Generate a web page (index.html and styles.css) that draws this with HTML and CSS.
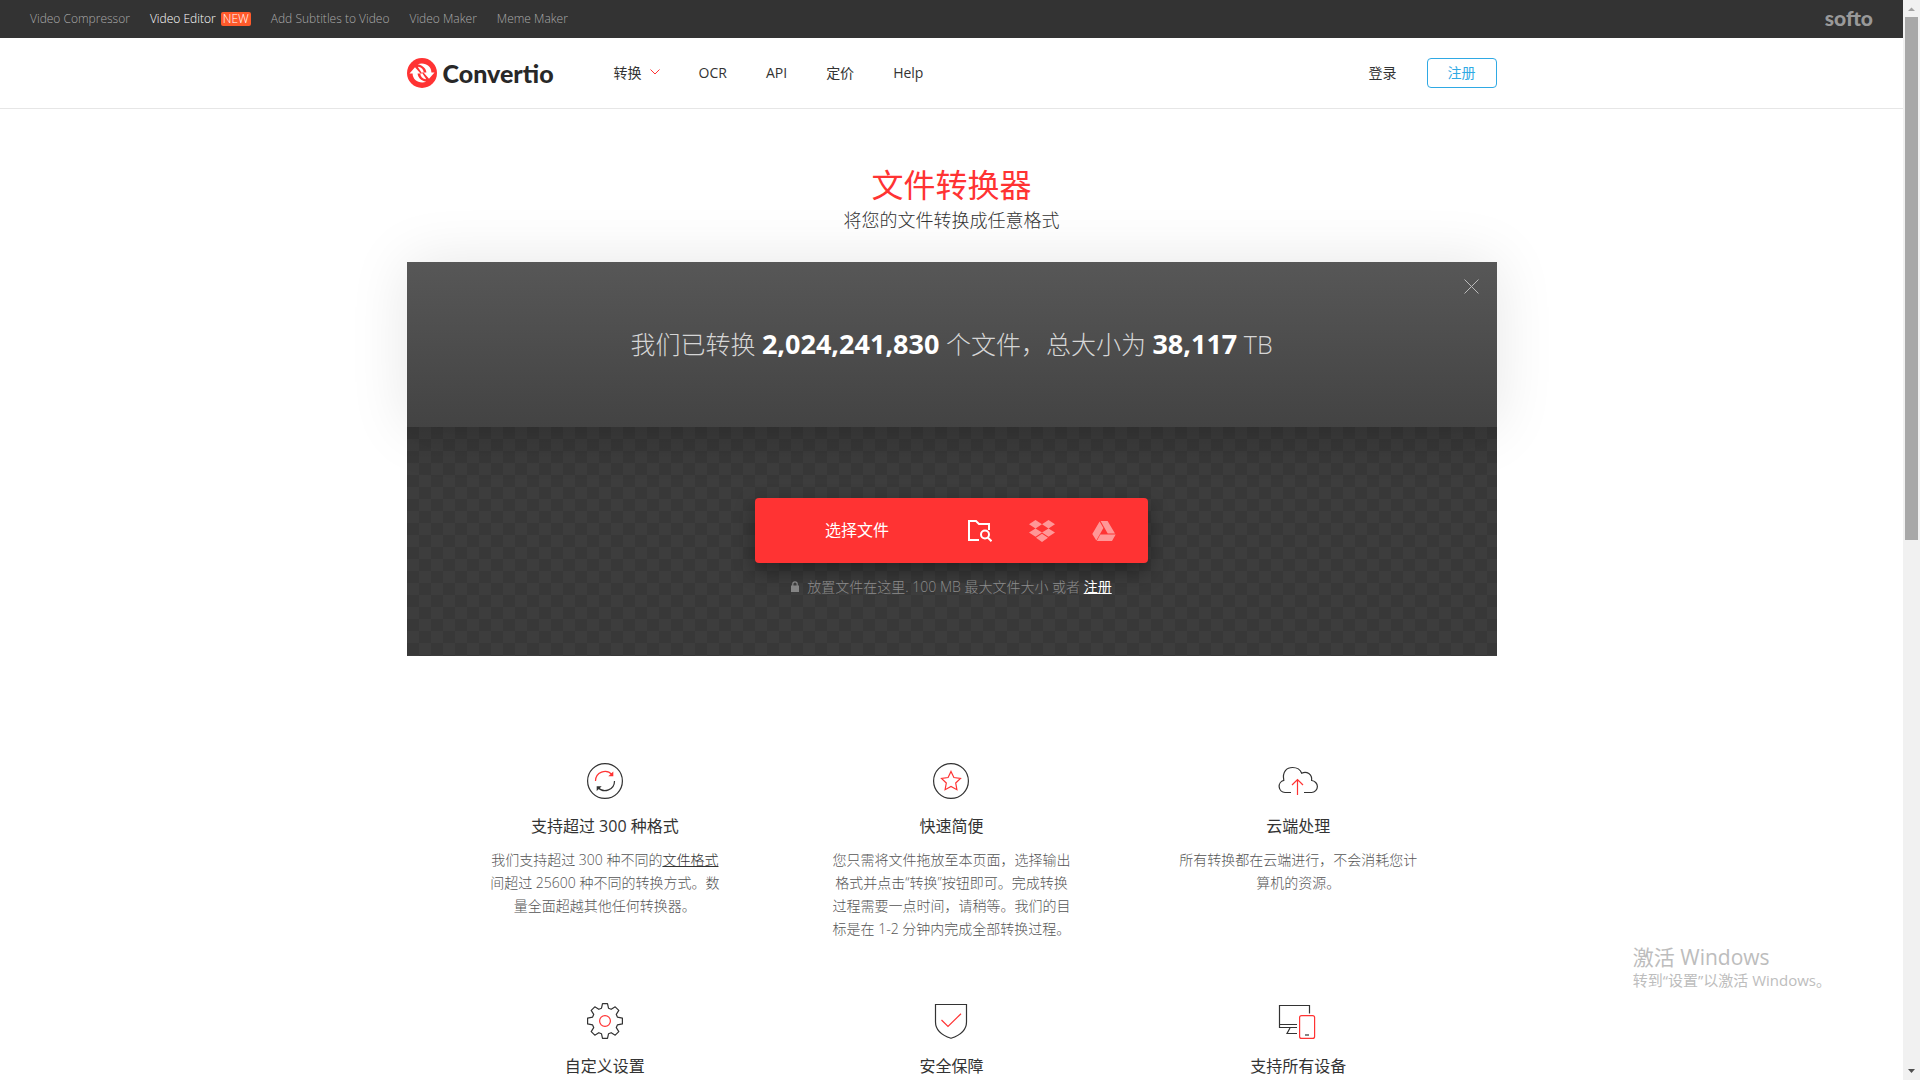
FILE: index.html
```html
<!DOCTYPE html>
<html lang="zh-CN">
<head>
<meta charset="utf-8">
<meta name="viewport" content="width=device-width, initial-scale=1">
<title>Convertio — 文件转换器</title>
<link rel="stylesheet" href="styles.css">
</head>
<body>
<div class="page">
  <div class="topbar">
    <nav class="topbar-links" aria-label="Softo">
      <a href="#">Video Compressor</a>
      <a href="#" class="active">Video Editor <span class="badge-new">NEW</span></a>
      <a href="#">Add Subtitles to Video</a>
      <a href="#">Video Maker</a>
      <a href="#">Meme Maker</a>
    </nav>
    <a href="#" class="softo">softo</a>
  </div>

  <header class="header">
    <div class="container header-inner">
      <a href="#" class="logo">
        <svg width="30" height="30" viewBox="0 0 30 30" aria-hidden="true">
          <circle cx="15" cy="15" r="15" fill="#f33"/>
          <path d="M2.500 15.500 8 9.300l5.500 6.200h-2.900c.3 4 3.200 7 8.600 8.300C12 26 5.600 22 5.600 15.500z" fill="#fff"/>
          <path d="M27.500 14.500 22 20.700l-5.500-6.200h2.900c-.3-4-3.200-7-8.600-8.300C18 4 24.400 8 24.400 14.500z" fill="#fff"/>
          <path d="M11.500 8.700c3.200.8 5 2.800 5.300 5.800h-2l4.200 6.200-.5.600c-3.200-.8-5-2.800-5.300-5.800h2L11 9.300z" fill="#fff"/>
        </svg>
        <span>Convertio</span>
      </a>
      <nav class="nav" aria-label="主菜单">
        <a href="#">转换
          <svg width="10" height="6" viewBox="0 0 10 6" fill="none" stroke="#f33" aria-hidden="true"><path d="M.5.5 5 5 9.500.5"/></svg>
        </a>
        <a href="#">OCR</a>
        <a href="#">API</a>
        <a href="#">定价</a>
        <a href="#">Help</a>
      </nav>
      <div class="account">
        <a href="#" class="login">登录</a>
        <button type="button" class="signup">注册</button>
      </div>
    </div>
  </header>

  <main class="container">
    <h1 class="title">文件转换器</h1>
    <p class="subtitle">将您的文件转换成任意格式</p>

    <section class="hero">
      <div class="stats">
        <p>我们已转换 <strong>2,024,241,830</strong> 个文件，总大小为 <strong>38,117</strong> TB</p>
        <button type="button" class="close" aria-label="关闭">
          <svg width="15" height="15" viewBox="0 0 15 15" fill="none" stroke="#bbb" aria-hidden="true"><path d="M.5.5l14 14M14.500.5l-14 14"/></svg>
        </button>
      </div>
      <div class="dropzone">
        <div class="picker">
          <button type="button" class="choose">选择文件</button>
          <button type="button" class="source" aria-label="本地文件">
            <svg width="24" height="22" viewBox="0 0 24 22" fill="none" stroke="#fff" stroke-width="2" aria-hidden="true"><path d="M11 20H1V1h7l3 3h10v6"/><circle cx="17" cy="14.500" r="4"/><path d="M19.800 17.500l3.700 3.700"/></svg>
          </button>
          <button type="button" class="source" aria-label="Dropbox">
            <svg width="26" height="22" viewBox="0 0 26 22" fill="#ff9797" aria-hidden="true"><path d="M6.500 0 13 4.200 6.500 8.400 0 4.200zM19.500 0 26 4.200l-6.500 4.200L13 4.200zM6.500 8.400l6.500 4.200-6.500 4.200L0 12.600zM19.500 8.400l6.500 4.200-6.500 4.200-6.500-4.200zM13 13.800l6 4-6 4.200-6-4.200z"/></svg>
          </button>
          <button type="button" class="source" aria-label="Google Drive">
            <svg width="24" height="20" viewBox="0 0 24 20" fill="#ff9797" aria-hidden="true"><path d="M7.600.5 11.400 7 4.300 19.500.3 13zM8.600 0h7l7.400 12.600h-7.300zM8.300 13.600h15.400L20 20H4.800z"/></svg>
          </button>
        </div>
        <p class="hint">
          <svg width="8" height="11" viewBox="0 0 8 11" aria-hidden="true"><path d="M0 4.500h8V11H0z" fill="#858585"/><path d="M1.800 5V3a2.200 2.200 0 0 1 4.400 0v2" fill="none" stroke="#858585" stroke-width="1.200"/></svg>
          <span>放置文件在这里. 100 MB 最大文件大小 或者 <a href="#">注册</a></span>
        </p>
      </div>
    </section>

    <section class="features">
      <article class="feature">
        <svg class="icon" width="42" height="36" viewBox="0 0 42 36" fill="none" stroke="#333" stroke-width="1.200" aria-hidden="true"><circle cx="21" cy="18" r="17.400"/><path d="M11.500 18a9.500 9.500 0 0 1 16.500-6.500" stroke="#f33"/><path d="M29.300 8.500v4.700h-5z" fill="#f33" stroke="none"/><path d="M30.500 18A9.500 9.500 0 0 1 14 24.500"/><path d="M12.700 28v-4.700h5z" fill="#333" stroke="none"/></svg>
        <h2>支持超过 300 种格式</h2>
        <p>我们支持超过 300 种不同的<a href="#">文件格式</a>间超过 25600 种不同的转换方式。数量全面超越其他任何转换器。</p>
      </article>
      <article class="feature">
        <svg class="icon" width="42" height="36" viewBox="0 0 42 36" fill="none" stroke="#333" stroke-width="1.200" aria-hidden="true"><circle cx="21" cy="18" r="17.400"/><path d="M21 8.500l2.900 6 6.600.9-4.800 4.600 1.200 6.700-5.900-3.200-5.900 3.200 1.200-6.700-4.800-4.600 6.600-.9z" stroke="#f33"/></svg>
        <h2>快速简便</h2>
        <p>您只需将文件拖放至本页面，选择输出格式并点击“转换”按钮即可。完成转换过程需要一点时间，请稍等。我们的目标是在 1-2 分钟内完成全部转换过程。</p>
      </article>
      <article class="feature">
        <svg class="icon" width="42" height="36" viewBox="0 0 42 36" fill="none" stroke="#333" stroke-width="1.200" aria-hidden="true"><path d="M14 29.500H8a6.200 6.200 0 0 1-1.200-12.200C5 8.500 10 4.500 15.500 4.500c4.500 0 7.800 2 9.200 5.700 5-2.600 10.800 1.200 9.900 7.300 3.200.4 5.800 3 5.800 6s-2.600 6-5.900 6H27"/><path d="M20.500 32V17M15 22l5.500-5.500L26 22" stroke="#f33"/></svg>
        <h2>云端处理</h2>
        <p>所有转换都在云端进行，不会消耗您计算机的资源。</p>
      </article>
      <article class="feature">
        <svg class="icon" width="42" height="36" viewBox="0 0 42 36" fill="none" stroke="#333" stroke-width="1.200" stroke-linejoin="round" aria-hidden="true"><path d="M18.500.6h5l1 4.600 2.700 1.100 4-2.500 3.600 3.600-2.500 4 1.100 2.700 5 1v5.800l-5 1-1.100 2.700 2.500 4-3.600 3.600-4-2.500-2.700 1.100-1 4.600h-5l-1-4.600-2.700-1.100-4 2.500-3.600-3.600 2.500-4-1.100-2.700-5-1v-5.800l5-1 1.100-2.700-2.500-4 3.600-3.600 4 2.500 2.700-1.100z"/><circle cx="21" cy="18" r="5.400" stroke="#f33"/></svg>
        <h2>自定义设置</h2>
      </article>
      <article class="feature">
        <svg class="icon" width="42" height="36" viewBox="0 0 42 36" fill="none" stroke="#333" stroke-width="1.200" aria-hidden="true"><path d="M5.500 1.500h31V19c0 8-7 13.500-15.500 16.300C12.500 32.500 5.500 27 5.500 19z"/><path d="M11.500 17l6.500 6.500L31 10.700" stroke="#f33"/></svg>
        <h2>安全保障</h2>
      </article>
      <article class="feature">
        <svg class="icon" width="42" height="36" viewBox="0 0 42 36" fill="none" stroke="#333" stroke-width="1.200" aria-hidden="true"><path d="M20 24.500H2.500v-22h30v8M2.500 21.500H20M13 25l-3 5.500h10"/><rect x="22.600" y="12.600" width="15" height="22.800" rx="2" stroke="#f33"/><path d="M28 32h4"/></svg>
        <h2>支持所有设备</h2>
      </article>
    </section>
  </main>

  <aside class="watermark">
    <p class="watermark-title">激活 Windows</p>
    <p>转到“设置”以激活 Windows。</p>
  </aside>
</div>
<div class="scrollbar" aria-hidden="true">
  <svg width="17" height="17" viewBox="0 0 17 17"><path d="M5 11h7L8.500 7.500z" fill="#a3a3a3"/></svg>
  <div class="thumb"></div>
  <svg width="17" height="17" viewBox="0 0 17 17"><path d="M5 6h7L8.500 10z" fill="#505050"/></svg>
</div>
</body>
</html>
```
FILE: styles.css
```css
* { box-sizing: border-box; }

body {
  margin: 0;
  height: 100vh;
  display: flex;
  overflow: hidden;
  background: #fff;
  color: #333;
  font: 300 14px/23px "Open Sans", "Noto Sans CJK SC", sans-serif;
}

h1, h2, p { margin: 0; font-weight: 300; }
a { color: inherit; text-decoration: none; }
button { font: inherit; color: inherit; border: 0; padding: 0; background: none; cursor: pointer; }
svg { display: block; flex: none; }

.page { flex: 1; position: relative; overflow: hidden; }
.container { max-width: 1090px; margin: 0 auto; }

.topbar {
  display: flex;
  justify-content: space-between;
  align-items: center;
  height: 38px;
  padding: 0 30px 2px;
  background: #333;
  color: #aaa;
  font-size: 12px;
}
.topbar-links { display: flex; gap: 20px; }
.topbar-links .active { color: #fff; }
.badge-new {
  display: inline-block;
  margin-left: 2px;
  padding: 0 2px;
  border-radius: 2px;
  background: #ff5a2b;
  line-height: 14px;
}
.softo { color: #999; font: 900 21px/24px Lato, sans-serif; }

.header { height: 71px; border-bottom: 1px solid #e6e6e6; }
.header-inner { display: flex; align-items: center; height: 70px; }
.logo {
  display: flex;
  align-items: center;
  gap: 6px;
  color: #282828;
  font: 900 25px/30px Lato, sans-serif;
}
.nav { display: flex; gap: 39px; margin-left: 60px; padding-bottom: 2px; font-weight: 400; }
.nav a { display: flex; align-items: center; gap: 8px; }
.account { display: flex; align-items: center; gap: 30px; margin-left: auto; font-weight: 400; }
.signup {
  width: 70px;
  height: 30px;
  padding-bottom: 2px;
  border: 1px solid #2fa9e4;
  border-radius: 4px;
  color: #2fa9e4;
}
.login { padding-bottom: 2px; }

.title { padding-top: 56px; color: #f33; font-size: 32px; font-weight: 400; line-height: 40px; text-align: center; }
.subtitle { font-size: 18px; line-height: 30px; text-align: center; }

.hero { margin-top: 27px; }
.stats {
  position: relative;
  height: 165px;
  padding-bottom: 2px;
  display: flex;
  align-items: center;
  justify-content: center;
  background: linear-gradient(#575757, #434343);
  box-shadow: 0 0 60px rgba(0, 0, 0, .1);
  color: #d6d6d6;
  font-size: 25px;
  line-height: 40px;
}
.stats strong { color: #fff; font-size: 27px; font-weight: 700; }
.close { position: absolute; top: 17px; right: 18px; }

.dropzone {
  display: flex;
  flex-direction: column;
  align-items: center;
  height: 229px;
  padding-top: 71px;
  background:
    linear-gradient(rgba(0, 0, 0, .1), transparent 40px),
    repeating-conic-gradient(#3d3d3d 0 25%, #383838 0 50%) 0 0 / 24px 24px;
}
.picker {
  display: flex;
  width: 393px;
  height: 65px;
  padding-right: 13px;
  border-radius: 4px;
  background: #f33;
  box-shadow: 0 8px 20px rgba(0, 0, 0, .4);
  color: #fff;
}
.choose { flex: 1; padding-left: 10px; font-size: 16px; font-weight: 400; }
.source { width: 62px; display: flex; align-items: center; justify-content: center; }
.hint { display: flex; align-items: center; gap: 8px; margin-top: 12px; color: #8c8c8c; }
.hint a { color: #fff; font-weight: 400; text-decoration: underline; }

.features {
  display: grid;
  grid-template-columns: repeat(3, 1fr);
  grid-auto-rows: 240px;
  padding: 107px 25px 0;
  text-align: center;
}
.icon { margin: 0 auto; }
.feature h2 { margin-top: 15px; font-size: 16px; font-weight: 400; line-height: 24px; }
.feature p { width: 240px; margin: 10px auto 0; color: #555; }
.feature a { color: #333; text-decoration: underline; }

.watermark { position: absolute; right: 72px; bottom: 88px; color: #bdbdbd; font-size: 15px; }
.watermark-title { font-size: 21px; line-height: 24px; }
.watermark p { font-weight: 400; }

.scrollbar { width: 17px; display: flex; flex-direction: column; background: #f1f1f1; }
.thumb { width: 13px; height: 523px; margin: 0 auto auto; background: #a8a8a8; }
```
